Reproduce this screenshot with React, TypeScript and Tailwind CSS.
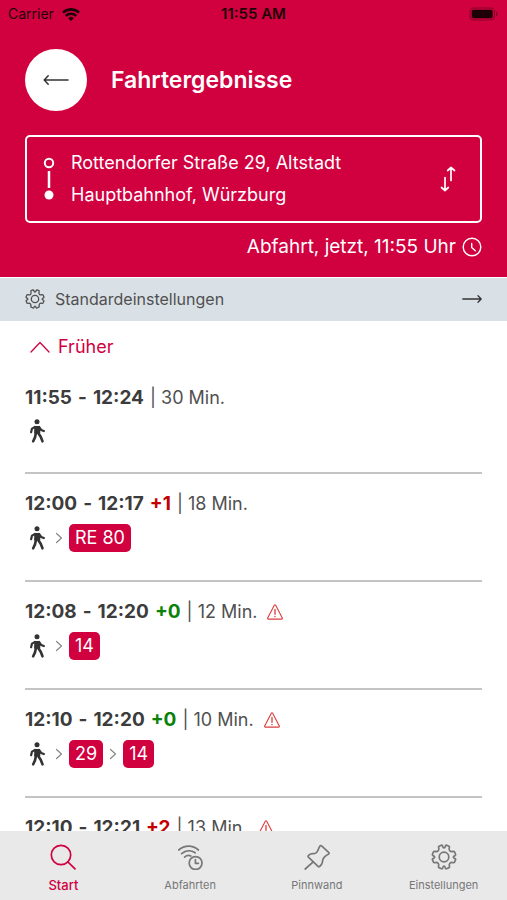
import { useState } from "react"
import clsx from "clsx"

interface IconProps {
    className?: string
}

interface Trip {
    departure: string
    arrival: string
    delay?: number
    late?: boolean
    duration: number
    warning?: boolean
    lines: string[]
}

const trips: Trip[] = [
    { departure: "11:55", arrival: "12:24", duration: 30, lines: [] },
    { departure: "12:00", arrival: "12:17", delay: 1, late: true, duration: 18, lines: ["RE 80"] },
    { departure: "12:08", arrival: "12:20", delay: 0, duration: 12, warning: true, lines: ["14"] },
    { departure: "12:10", arrival: "12:20", delay: 0, duration: 10, warning: true, lines: ["29", "14"] },
    { departure: "12:10", arrival: "12:21", delay: 2, late: true, duration: 13, warning: true, lines: ["29", "14"] },
]

const WifiIcon = ({ className }: IconProps) => (
    <svg viewBox="0 0 18 13" className={className} fill="none" stroke="currentColor" strokeWidth="2.6" aria-hidden="true">
        <path d="M1 4.6a11.6 11.6 0 0 1 16 0" />
        <path d="M3.8 7.9a7.5 7.5 0 0 1 10.4 0" />
        <path d="M9 13 6.2 10.2a4 4 0 0 1 5.6 0Z" fill="currentColor" stroke="none" />
    </svg>
)

const BatteryIcon = ({ className }: IconProps) => (
    <svg viewBox="0 0 30 14" className={className} aria-hidden="true">
        <rect x="1" y="1" width="24.5" height="12" rx="3.4" fill="none" stroke="currentColor" strokeOpacity="0.4" />
        <rect x="2.7" y="2.7" width="21" height="8.6" rx="1.8" fill="currentColor" />
        <path d="M27 4.8c2 .7 2 3.7 0 4.4Z" fill="currentColor" fillOpacity="0.45" />
    </svg>
)

const ArrowLeftIcon = ({ className }: IconProps) => (
    <svg viewBox="0 0 26 12" className={className} fill="none" stroke="currentColor" strokeWidth="1.5" strokeLinecap="round" strokeLinejoin="round" aria-hidden="true">
        <path d="M25 6H1.2M5.2 1.8 1.2 6l4 4.2" />
    </svg>
)

const ArrowRightIcon = ({ className }: IconProps) => (
    <svg viewBox="0 0 20 10" className={className} fill="none" stroke="currentColor" strokeWidth="1.3" strokeLinecap="round" strokeLinejoin="round" aria-hidden="true">
        <path d="M.8 5h18.4M16 1.8 19.2 5 16 8.2" />
    </svg>
)

const RouteIcon = ({ className }: IconProps) => (
    <svg viewBox="0 0 12 44" className={className} fill="none" stroke="currentColor" strokeWidth="2" aria-hidden="true">
        <circle cx="6" cy="6" r="4.2" />
        <path d="M6 14v17" strokeWidth="2.5" />
        <circle cx="6" cy="38" r="4.5" fill="currentColor" stroke="none" />
    </svg>
)

const SwapIcon = ({ className }: IconProps) => (
    <svg viewBox="0 0 16 26" className={className} fill="none" stroke="currentColor" strokeWidth="1.7" strokeLinecap="round" strokeLinejoin="round" aria-hidden="true">
        <path d="M11 14.5v-13M7.7 4.5l3.3-3 3.5 3" />
        <path d="M5 11.5v13M1.5 21.5l3.5 3 3.3-3" />
    </svg>
)

const ClockIcon = ({ className }: IconProps) => (
    <svg viewBox="0 0 20 20" className={className} fill="none" stroke="currentColor" strokeWidth="1.4" strokeLinecap="round" strokeLinejoin="round" aria-hidden="true">
        <circle cx="10" cy="10" r="8.8" />
        <path d="M9.7 6.5v4l3.6 3.2" />
    </svg>
)

const GearIcon = ({ className }: IconProps) => (
    <svg viewBox="0 0 26 26" className={className} fill="none" stroke="currentColor" strokeWidth="1.7" strokeLinejoin="round" aria-hidden="true">
        <circle cx="13" cy="13" r="4.8" />
        <path d="M8 2.200 L10.300 1.200 Q11.200 .900 11.500 2 Q12 3.900 13 3.900 T14.500 2 Q14.800 .900 15.700 1.200 L18 2.200 Q18.700 2.600 18.400 3.400 Q17.600 5.500 18.600 6.700 Q20.200 8.200 22.200 7.400 Q23.200 7.200 23.500 7.900 L24.600 10.400 Q24.900 11.200 24.100 11.600 Q22.300 12.300 22.300 13.200 T24.100 14.600 Q24.900 15 24.600 15.700 L23.500 18.200 Q23.200 18.900 22.300 18.700 Q20.200 18 18.900 19.300 Q17.800 20.600 18.500 22.400 Q18.800 23.300 18 23.600 L15.500 24.700 Q14.700 24.900 14.400 24.100 Q13.800 22.200 13 22.200 T11.600 24.100 Q11.300 24.900 10.500 24.700 L8 23.600 Q7.200 23.300 7.500 22.400 Q8.200 20.600 7.100 19.300 Q5.800 18 3.700 18.700 Q2.800 18.900 2.500 18.200 L1.400 15.700 Q1.100 15 1.900 14.600 Q3.700 14 3.700 13.200 T1.900 11.600 Q1.100 11.200 1.400 10.400 L2.500 7.900 Q2.800 7.200 3.800 7.400 Q5.800 8.200 7.400 6.700 Q8.400 5.500 7.600 3.400 Q7.300 2.600 8 2.200Z" />
    </svg>
)

const ChevronUpIcon = ({ className }: IconProps) => (
    <svg viewBox="0 0 20 12" className={className} fill="none" stroke="currentColor" strokeWidth="1.3" strokeLinecap="round" strokeLinejoin="round" aria-hidden="true">
        <path d="M1 11 10 1.5 19 11" />
    </svg>
)

const ChevronRightIcon = ({ className }: IconProps) => (
    <svg viewBox="0 0 8 12" className={className} fill="none" stroke="currentColor" strokeWidth="1.2" strokeLinecap="round" strokeLinejoin="round" aria-label="dann" role="img">
        <path d="M1.5 1.5 6.5 6l-5 4.5" />
    </svg>
)

const WalkIcon = ({ className }: IconProps) => (
    <svg viewBox="0 0 16 24" className={className} fill="none" stroke="currentColor" strokeLinecap="round" strokeLinejoin="round" aria-label="Fußweg" role="img">
        <circle cx="8" cy="2.8" r="2.5" fill="currentColor" stroke="none" />
        <path d="M6.2 7.8h4l.2 6H6Z" fill="currentColor" strokeWidth="1.8" />
        <path d="M6 8 3 9.6l-.9 3.600" strokeWidth="2.200" />
        <path d="m10 8 2.200 3 2.600 1" strokeWidth="2.200" />
        <path d="M6.900 14 6 18.400l-1.800 3.900" strokeWidth="2.600" />
        <path d="m9.200 14 2.500 3.800 1.800 4.500" strokeWidth="2.600" />
    </svg>
)

const WarningIcon = ({ className }: IconProps) => (
    <svg viewBox="0 0 16 16" className={className} fill="none" stroke="currentColor" strokeWidth="1.1" strokeLinecap="round" strokeLinejoin="round" aria-label="Störung" role="img">
        <path d="M7.3 1.2a.8.8 0 0 1 1.4 0l6.6 12.7a.8.8 0 0 1-.7 1.2H1.4a.8.8 0 0 1-.7-1.2Z" />
        <path d="M8 5.5v4.8M8 12.3v.4" strokeWidth="1.3" />
    </svg>
)

const SearchIcon = ({ className }: IconProps) => (
    <svg viewBox="0 0 26 26" className={className} fill="none" stroke="currentColor" strokeWidth="1.7" strokeLinecap="round" aria-hidden="true">
        <circle cx="11" cy="11" r="9.7" />
        <path d="m18 18 7 6.8" />
    </svg>
)

const DeparturesIcon = ({ className }: IconProps) => (
    <svg viewBox="0 0 26 26" className={className} fill="none" stroke="currentColor" strokeWidth="1.7" strokeLinecap="round" strokeLinejoin="round" aria-hidden="true">
        <path d="M1.8 6C7.500.9 15.700.9 21.400 6" />
        <path d="M4.600 9.700c4.200-3.700 9.600-3.700 13.600-.9" />
        <path d="M7.600 13.100c2-1.700 4.300-2 6.300-1.100" />
        <circle cx="18.600" cy="19" r="6.400" />
        <path d="M18.400 15.600v3.700h3" />
    </svg>
)

const PinIcon = ({ className }: IconProps) => (
    <svg viewBox="0 0 26 26" className={className} fill="none" stroke="currentColor" strokeWidth="1.7" strokeLinecap="round" strokeLinejoin="round" aria-hidden="true">
        <path d="M15.800 2.300c.7-.9 1.400-.9 2.100-.2l6.700 6.200c.8.800.6 1.500-.3 2-1.800.7-3 1.900-4.200 3.100-1.500 1.600-1.500 3-1.700 4.700-.2 1.700-1.300 3-2.600 4.200-.7.600-1.300.5-2-.2L4.600 13.400c-.7-.8-.7-1.400 0-2.100 1.300-1.200 2.800-1.700 4.700-1.600 1.500.1 2.500-.4 3.500-1.500 1.400-1.600 1.800-4.200 3-5.900Z" />
        <path d="m9.200 17.800-8 7.200" />
    </svg>
)

const tabs = [
    { label: "Start", icon: SearchIcon },
    { label: "Abfahrten", icon: DeparturesIcon },
    { label: "Pinnwand", icon: PinIcon },
    { label: "Einstellungen", icon: GearIcon },
]

const TripRow = ({ trip }: { trip: Trip }) => (
    <li className="border-b-2 border-[#c4c4c4] pt-4 pb-7">
        <a href="#trip" className="flex flex-col gap-1.5">
            <div className="flex items-center">
                <p className="flex items-baseline gap-1.5 text-[19px]/7 font-bold text-[#3c3c3c]">
                    <time>{trip.departure}</time>
                    <span>-</span>
                    <time>{trip.arrival}</time>
                    {trip.delay !== undefined && (
                        <span className={trip.late ? "text-[#c40000]" : "text-[#0a820a]"}>+{trip.delay}</span>
                    )}
                    <span className="text-lg/7 font-normal text-[#505050]">| {trip.duration} Min.</span>
                </p>
                {trip.warning && <WarningIcon className="ml-2.5 size-4 text-[#dc3c3c]" />}
            </div>
            <div className="flex min-h-[26px] items-center">
                <WalkIcon className="mr-1 ml-1 h-6 w-4 text-[#333]" />
                {trip.lines.map((line) => (
                    <div key={line} className="flex items-center">
                        <ChevronRightIcon className="mx-1.5 h-3 w-2 text-[#888]" />
                        <span className="rounded-[5px] bg-[#d1003f] px-1.5 text-lg/7 text-white">{line}</span>
                    </div>
                ))}
            </div>
        </a>
    </li>
)

const App = () => {
    const [activeTab, setActiveTab] = useState("Start")

    return (
        <div className="flex h-screen flex-col bg-white font-['Inter',sans-serif] text-[#505050]">
            <header className="shrink-0 bg-[#d1003f] pb-4 text-white">
                {/* Status bar */}
                <div className="grid grid-cols-3 items-center px-2 text-sm/7 text-[#1e0008]">
                    <div className="flex items-center gap-2">
                        <span>Carrier</span>
                        <WifiIcon className="h-[13px] w-[18px]" />
                    </div>
                    <span className="text-center text-[15px]/7 font-semibold">11:55 AM</span>
                    <BatteryIcon className="h-3.5 w-[30px] justify-self-end" />
                </div>

                <div className="px-[25px]">
                    <div className="mt-[21px] flex items-center gap-6">
                        <button
                            type="button"
                            aria-label="Zurück"
                            className="flex size-[62px] items-center justify-center rounded-full bg-white text-[#333]"
                        >
                            <ArrowLeftIcon className="h-3 w-[26px]" />
                        </button>
                        <h1 className="text-[23px]/7 font-semibold">Fahrtergebnisse</h1>
                    </div>

                    <div className="mt-6 flex items-center rounded-[5px] border-2 border-white px-4 py-2.5">
                        <RouteIcon className="h-11 w-3" />
                        <div className="ml-4 flex-1 text-lg/8">
                            <p>Rottendorfer Straße 29, Altstadt</p>
                            <p>Hauptbahnhof, Würzburg</p>
                        </div>
                        <button type="button" aria-label="Start und Ziel tauschen" className="mr-2">
                            <SwapIcon className="h-[26px] w-4" />
                        </button>
                    </div>

                    <button type="button" className="mt-2.5 ml-auto flex items-center gap-1.5 text-[19px]/7">
                        Abfahrt, jetzt, 11:55 Uhr
                        <ClockIcon className="size-5" />
                    </button>
                </div>
            </header>

            <button
                type="button"
                className="flex h-11 shrink-0 items-center border-t border-white bg-[#dae1e6] px-[25px] pb-0.5 text-base/6"
            >
                <GearIcon className="mr-2.5 size-5" />
                Standardeinstellungen
                <ArrowRightIcon className="ml-auto h-2.5 w-5 text-[#333]" />
            </button>

            <main className="min-h-0 flex-1 overflow-hidden px-[25px]">
                <button type="button" className="mt-3 ml-[5px] flex items-center gap-2 text-lg/7 text-[#d1003f]">
                    <ChevronUpIcon className="h-3 w-5" />
                    Früher
                </button>
                <ul className="mt-[7px]">
                    {trips.map((trip) => (
                        <TripRow key={`${trip.departure}-${trip.arrival}`} trip={trip} />
                    ))}
                </ul>
            </main>

            <nav className="grid h-[69px] shrink-0 grid-cols-4 bg-[#e9e9e9]">
                {tabs.map(({ label, icon: Icon }) => (
                    <button
                        key={label}
                        type="button"
                        onClick={() => setActiveTab(label)}
                        className={clsx(
                            "flex flex-col items-center gap-[5px] pt-[13px]",
                            activeTab === label ? "text-[13px]/5 font-medium text-[#d1003f]" : "text-[11px]/5 text-[#777]"
                        )}
                    >
                        <Icon className="size-[26px]" />
                        {label}
                    </button>
                ))}
            </nav>
        </div>
    )
}

export default App
